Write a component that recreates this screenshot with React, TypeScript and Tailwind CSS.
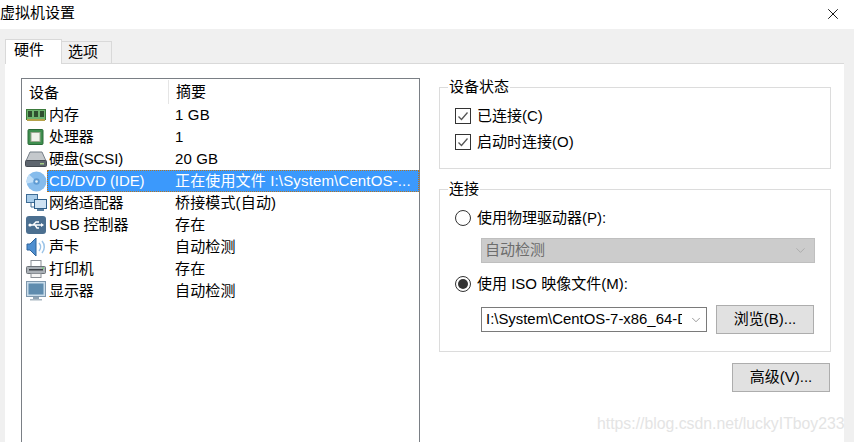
import { X, ChevronDown } from "lucide-react";

const font = "font-['Liberation_Sans','Noto_Sans_CJK_SC',sans-serif]";

const MemoryIcon = () => (
  <svg width="20" height="14" viewBox="0 0 20 14">
    <rect x="0.5" y="1.5" width="19" height="10" fill="#6fb56f" stroke="#3b7a3b" />
    <rect x="2" y="3" width="4" height="6" fill="#2f4f2f" />
    <rect x="8" y="3" width="4" height="6" fill="#2f4f2f" />
    <rect x="14" y="3" width="4" height="6" fill="#2f4f2f" />
    <rect x="1" y="11" width="18" height="2" fill="#b5a24a" />
  </svg>
);

const CpuIcon = () => (
  <svg width="18" height="16" viewBox="0 0 18 16">
    <rect x="1" y="0.5" width="15" height="15" rx="1" fill="#3f8f4f" stroke="#2a6a38" />
    <rect x="4" y="3.5" width="9" height="9" fill="#f0f2ea" stroke="#9aa890" />
  </svg>
);

const DiskIcon = () => (
  <svg width="22" height="16" viewBox="0 0 22 16">
    <path d="M5 1h12l4 9H1z" fill="#c4c8cc" stroke="#77808a" />
    <rect x="0.5" y="9.5" width="21" height="6" rx="1" fill="#5d656e" stroke="#444b52" />
    <rect x="15" y="12" width="4" height="1.5" fill="#a8d08a" />
  </svg>
);

const CdIcon = () => (
  <svg width="21" height="21" viewBox="0 0 21 21">
    <circle cx="10.5" cy="10.5" r="10" fill="#86bcec" />
    <path d="M10.5 10.5L3 3.5a10 10 0 0 0-2 9z" fill="#bfdef8" />
    <circle cx="10.5" cy="10.5" r="3.2" fill="#5f9bd2" />
    <circle cx="10.5" cy="10.5" r="1.3" fill="#e6f2fb" />
  </svg>
);

const NetworkIcon = () => (
  <svg width="21" height="18" viewBox="0 0 21 18">
    <rect x="0.5" y="0.5" width="11" height="8" fill="#a9cdea" stroke="#3f6d96" />
    <path d="M5 9v4h5" fill="none" stroke="#3f6d96" />
    <rect x="8.5" y="5.5" width="12" height="9" fill="#cfe3f3" stroke="#2e5f8a" />
    <rect x="11" y="15" width="7" height="2" fill="#5a7f9f" />
  </svg>
);

const UsbIcon = () => (
  <svg width="20" height="18" viewBox="0 0 20 18">
    <rect width="20" height="18" rx="3" fill="#4b6f90" />
    <path d="M3 9h13M7 9l3-3h3M9 9l2 3h2" fill="none" stroke="#fff" strokeWidth="1.4" />
    <path d="M15 7l3 2-3 2z" fill="#fff" />
    <circle cx="4" cy="9" r="1.6" fill="#fff" />
  </svg>
);

const SoundIcon = () => (
  <svg width="20" height="20" viewBox="0 0 20 20">
    <path d="M1 7h3l6-6v18l-6-6H1z" fill="#4f8fd0" stroke="#2f659c" />
    <path d="M13 6a6 6 0 0 1 0 8M16 4a9 9 0 0 1 0 12" fill="none" stroke="#9cc4e8" strokeWidth="1.5" />
  </svg>
);

const PrinterIcon = () => (
  <svg width="20" height="18" viewBox="0 0 20 18">
    <rect x="5" y="0.5" width="10" height="6" fill="#fff" stroke="#8a8f95" />
    <rect x="0.5" y="6.5" width="19" height="7" rx="1" fill="#aab0b6" stroke="#6d7379" />
    <rect x="3" y="9" width="14" height="1.5" fill="#3b4046" />
    <rect x="16" y="7.5" width="2" height="1.2" fill="#6fd06f" />
    <rect x="5" y="13.5" width="10" height="4" fill="#f4f4f4" stroke="#8a8f95" />
  </svg>
);

const MonitorIcon = () => (
  <svg width="20" height="20" viewBox="0 0 20 20">
    <rect x="0.5" y="0.5" width="19" height="15" fill="#c9dcea" stroke="#7f98ad" />
    <rect x="2.5" y="2.5" width="15" height="11" fill="#5f8cae" />
    <rect x="7" y="16" width="6" height="2" fill="#8fa3b3" />
    <rect x="4" y="18" width="12" height="1.5" fill="#a9b7c2" />
  </svg>
);

const devices = [
  { icon: <MemoryIcon />, name: "内存", summary: "1 GB" },
  { icon: <CpuIcon />, name: "处理器", summary: "1" },
  { icon: <DiskIcon />, name: "硬盘(SCSI)", summary: "20 GB" },
  { icon: <CdIcon />, name: "CD/DVD (IDE)", summary: "正在使用文件 I:\\System\\CentOS-...", selected: true },
  { icon: <NetworkIcon />, name: "网络适配器", summary: "桥接模式(自动)" },
  { icon: <UsbIcon />, name: "USB 控制器", summary: "存在" },
  { icon: <SoundIcon />, name: "声卡", summary: "自动检测" },
  { icon: <PrinterIcon />, name: "打印机", summary: "存在" },
  { icon: <MonitorIcon />, name: "显示器", summary: "自动检测" },
];

const Check = ({ label }: { label: string }) => (
  <div className="flex items-center gap-[6px] h-[26px]">
    <span className="w-[16px] h-[16px] border border-[#333] flex items-center justify-center">
      <svg width="12" height="12" viewBox="0 0 12 12">
        <path d="M1.5 6.5l3 3 6-7" fill="none" stroke="#555" strokeWidth="1.3" />
      </svg>
    </span>
    <span>{label}</span>
  </div>
);

const Radio = ({ label, on }: { label: string; on?: boolean }) => (
  <div className="flex items-center gap-[6px] h-[20px]">
    <span className="w-[16px] h-[16px] rounded-full border border-[#333] flex items-center justify-center">
      {on && <span className="w-[10px] h-[10px] rounded-full bg-[#333]" />}
    </span>
    <span>{label}</span>
  </div>
);

const Btn = ({ label }: { label: string }) => (
  <button className="w-[98px] h-[29px] bg-[#e1e1e1] border border-[#adadad] text-[15px] text-black">
    {label}
  </button>
);

const App = () => {
  return (
    <div className={`relative w-[854px] h-[442px] overflow-hidden bg-white flex flex-col text-[15px] text-black ${font}`}>
      <div className="h-[29px] shrink-0 flex items-center justify-between pr-[12px] pb-[2px]">
        <span>虚拟机设置</span>
        <X size={18} strokeWidth={1.2} />
      </div>

      <div className="flex-1 min-h-0 bg-[#f0f0f0] pl-[5px] pr-[10px] flex flex-col">
        <div className="h-[34px] shrink-0 flex items-end">
          <div className="w-[57px] h-[25px] bg-white border border-b-0 border-[#d9d9d9] pl-[8px] leading-[19px] relative top-px">
            硬件
          </div>
          <div className="w-[50px] h-[22px] border border-b-0 border-l-0 border-[#d9d9d9] pl-[6px] leading-[19px]">
            选项
          </div>
        </div>

        <div className="flex-1 min-h-0 bg-white border-t border-[#d9d9d9] pl-[16px] pt-[14px] flex gap-[19px]">
          <div className="w-[399px] shrink-0 border-l border-t border-r border-[#7a7f85] h-[400px]">
            <div className="flex h-[25px] items-center">
              <div className="w-[147px] pl-[7px] h-[24px] leading-[26px] border-r border-[#e5e5e5]">设备</div>
              <div className="pl-[7px] leading-[26px]">摘要</div>
            </div>
            {devices.map((d) => (
              <div key={d.name} className="flex h-[22px] items-center">
                <div className="w-[25px] shrink-0 flex items-center justify-center pl-[3px]">{d.icon}</div>
                <div className={`flex-1 h-full flex items-center ${d.selected ? "bg-[#3b99fc] text-white outline-1 -outline-offset-1 outline-dotted outline-[#b5751f]" : ""}`}>
                  <div className="w-[128px] pl-[2px] whitespace-nowrap tracking-[-0.1px]">{d.name}</div>
                  <div className="whitespace-nowrap tracking-[0.15px]">{d.summary}</div>
                </div>
              </div>
            ))}
          </div>

          <div className="w-[392px] shrink-0 pt-[1px] flex flex-col">
            <fieldset className="border border-[#dcdcdc] h-[90px] pl-[15px] pt-[10px]">
              <legend className="px-[1px] -ml-[7px] -mb-[2px] leading-[16px]">设备状态</legend>
              <Check label="已连接(C)" />
              <Check label="启动时连接(O)" />
            </fieldset>

            <fieldset className="border border-[#dcdcdc] h-[171px] mt-[12px] pl-[15px] pt-[13px]">
              <legend className="px-[1px] -ml-[7px] -mb-[2px] leading-[16px]">连接</legend>
              <Radio label="使用物理驱动器(P):" />
              <div className="ml-[26px] mt-[10px] w-[334px] h-[25px] bg-[#cccccc] border border-[#bfbfbf] flex items-center justify-between px-[3px] text-[#6d6d6d]">
                <span>自动检测</span>
                <ChevronDown size={15} strokeWidth={1} className="text-[#9a9a9a] mr-[3px]" />
              </div>
              <div className="mt-[11px]">
                <Radio label="使用 ISO 映像文件(M):" on />
              </div>
              <div className="ml-[26px] mt-[11px] flex items-center gap-[9px]">
                <div className="w-[226px] h-[25px] border border-[#7a7a7a] flex items-center pl-[4px] justify-between pr-[3px]">
                  <span className="w-[196px] overflow-hidden whitespace-nowrap text-[14.9px]">I:\System\CentOS-7-x86_64-DVD</span>
                  <ChevronDown size={14} strokeWidth={1} className="text-[#555]" />
                </div>
                <Btn label="浏览(B)..." />
              </div>
            </fieldset>

            <div className="mt-[11px] flex justify-end pr-px">
              <Btn label="高级(V)..." />
            </div>
          </div>
        </div>
      </div>

      <div className="absolute left-[597px] top-[415px] text-[15.8px] leading-[18px] text-[#e4e4e4] whitespace-nowrap">
        https://blog.csdn.net/luckyITboy233
      </div>
    </div>
  );
};

export default App;
